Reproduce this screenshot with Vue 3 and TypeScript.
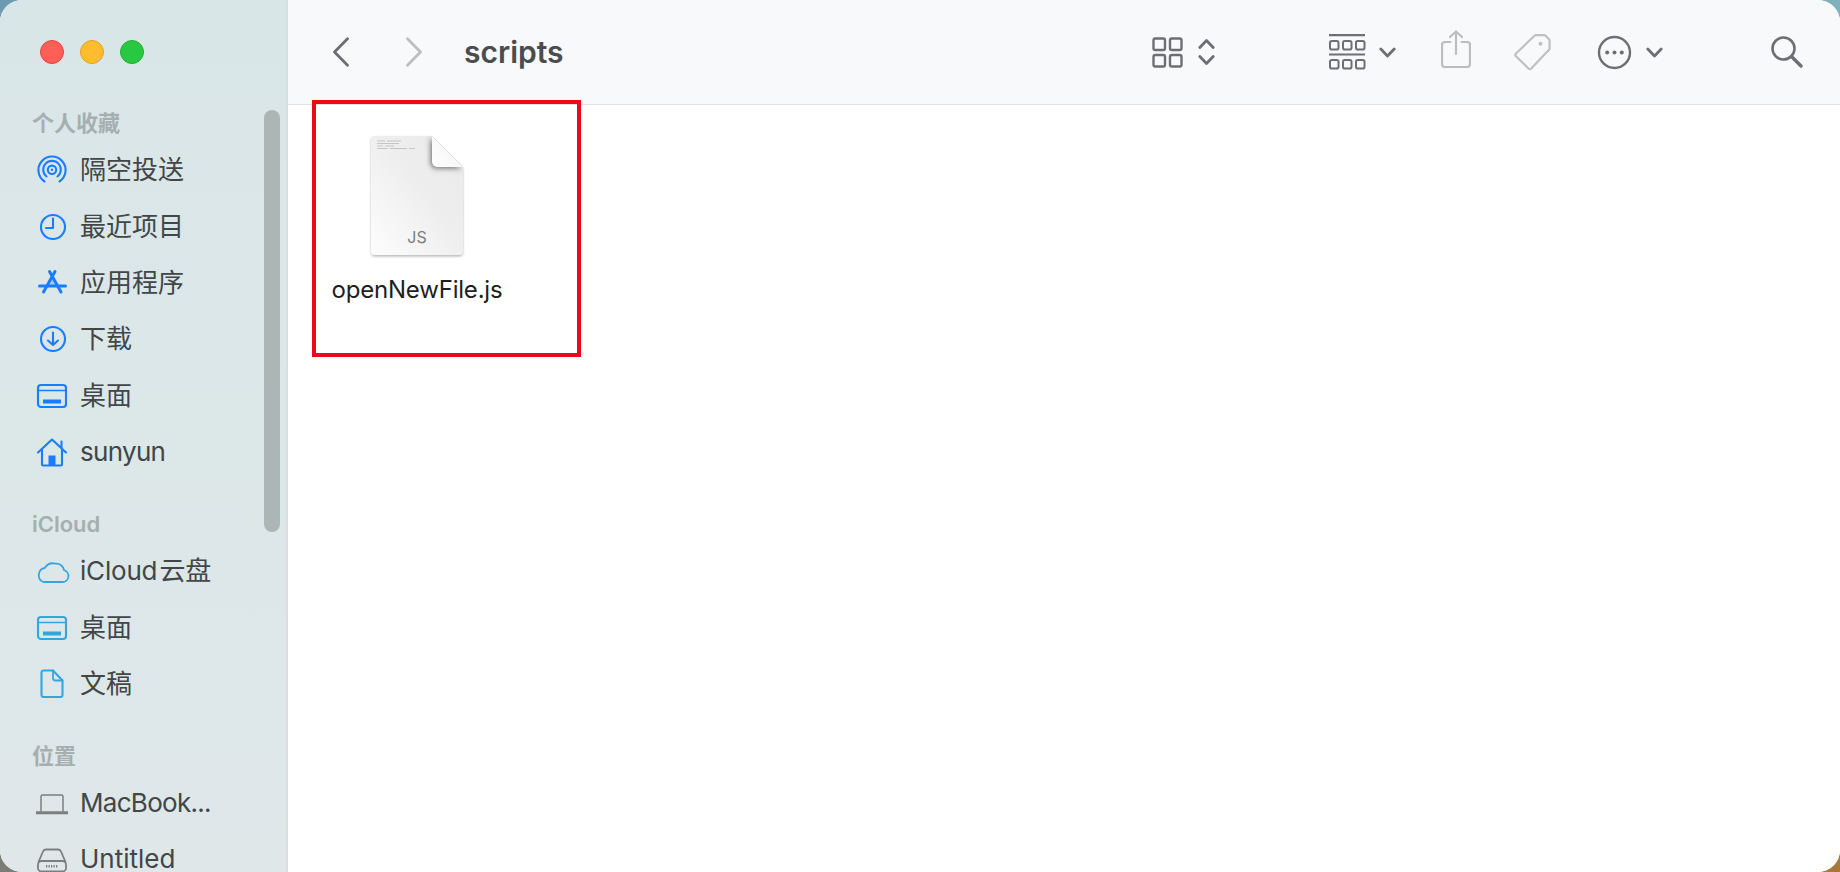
<script setup lang="ts">
interface Row { icon: string; label: string; tone: string; fit?: string }
interface Section { title: string; rows: Row[] }
const sections: Section[] = [
  { title: '个人收藏', rows: [
    { icon: 'airdrop', label: '隔空投送', tone: 'blue' },
    { icon: 'clock', label: '最近项目', tone: 'blue' },
    { icon: 'apps', label: '应用程序', tone: 'blue' },
    { icon: 'download', label: '下载', tone: 'blue' },
    { icon: 'desktop', label: '桌面', tone: 'blue' },
    { icon: 'home', label: 'sunyun', tone: 'blue', fit: 'tight' },
  ] },
  { title: 'iCloud', rows: [
    { icon: 'cloud', label: 'iCloud\u200A云盘', tone: 'sky', fit: 'slight' },
    { icon: 'desktop', label: '桌面', tone: 'sky' },
    { icon: 'doc', label: '文稿', tone: 'sky' },
  ] },
  { title: '位置', rows: [
    { icon: 'laptop', label: 'MacBook...', tone: 'gray', fit: 'tight' },
    { icon: 'disk', label: 'Untitled', tone: 'gray' },
  ] },
]
</script>

<template>
  <div class="desk">
    <div class="window">
      <aside class="sidebar">
        <div class="lights">
          <span class="light red"></span>
          <span class="light yellow"></span>
          <span class="light green"></span>
        </div>
        <section v-for="s in sections" :key="s.title" class="group">
          <h3 class="group-title">{{ s.title }}</h3>
          <div v-for="r in s.rows" :key="r.label" class="row">
            <svg class="row-icon" :class="r.tone" viewBox="0 0 36 36" fill="none" stroke="currentColor" stroke-width="2.1" stroke-linecap="round" stroke-linejoin="round">
              <template v-if="r.icon === 'airdrop'">
                <path d="M10.500 29.500a13.600 13.600 0 1 1 15 0" />
                <path d="M12.500 24.500a8.800 8.800 0 1 1 11 0" />
                <circle cx="18" cy="17.800" r="4.200" />
                <circle cx="18" cy="17.800" r="1.200" fill="currentColor" stroke="none" />
              </template>
              <template v-else-if="r.icon === 'clock'">
                <circle cx="19" cy="18" r="12" />
                <path d="M19 9.500V19H12" />
              </template>
              <template v-else-if="r.icon === 'apps'">
                <path d="M15.500 6.500L27 27" stroke-width="3" />
                <path d="M21 6.500L9.500 27" stroke-width="3" />
                <path d="M5.500 21h26" stroke-width="3" />
                <path d="M12 21l6.200-9 6.200 9z" fill="currentColor" stroke="none" opacity=".25" />
              </template>
              <template v-else-if="r.icon === 'download'">
                <circle cx="19" cy="18" r="12" />
                <path d="M19 11.500V24M14 19.500l5 4.600 5-4.600" />
              </template>
              <template v-else-if="r.icon === 'desktop'">
                <rect x="4" y="7" width="28" height="22" rx="3" />
                <path d="M4 12.500h28" stroke-width="1.600" />
                <rect x="9" y="21.500" width="18" height="4" fill="currentColor" stroke="none" />
              </template>
              <template v-else-if="r.icon === 'home'">
                <path d="M4 18.500L18 5.500l14 13" />
                <path d="M8 16v14.500a1 1 0 0 0 1 1h18a1 1 0 0 0 1-1V16" />
                <path d="M27.500 7.500v6" />
                <rect x="14.500" y="21.500" width="7" height="10" fill="currentColor" stroke="none" />
              </template>
              <template v-else-if="r.icon === 'cloud'">
                <path d="M9.500 29h19a6 6 0 0 0 1.500-11.800 7.500 7.500 0 0 0-8.500-6.500A9.500 9.500 0 0 0 11 14.800 7.400 7.400 0 0 0 9.500 29z" stroke-width="1.800" />
              </template>
              <template v-else-if="r.icon === 'doc'">
                <path d="M9 6.500a2 2 0 0 1 2-2h9.500L30 14.500V29a2 2 0 0 1-2 2H11a2 2 0 0 1-2-2z" transform="translate(-1.500 0)" />
                <path d="M19 4.500V12a2.500 2.500 0 0 0 2.500 2.500H28.500" stroke-width="1.800" />
              </template>
              <template v-else-if="r.icon === 'laptop'">
                <path d="M7 26V11.500A1.500 1.500 0 0 1 8.500 10h19a1.500 1.500 0 0 1 1.500 1.500V26" stroke-width="1.500" />
                <path d="M2 27.800h32" stroke-width="3" stroke-linecap="butt" />
              </template>
              <template v-else>
                <path d="M4.500 21L9 10.500A3 3 0 0 1 11.700 8.500h12.600a3 3 0 0 1 2.700 2L31.500 21" stroke-width="1.800" />
                <rect x="4" y="20" width="28" height="10.500" rx="3.500" stroke-width="1.800" />
                <path d="M12 25.300h12" stroke-width="2.600" stroke-dasharray="1.300 1.200" stroke-linecap="butt" />
              </template>
            </svg>
            <span class="row-label" :class="r.fit">{{ r.label }}</span>
          </div>
        </section>
        <div class="scrollbar"></div>
      </aside>

      <main class="main">
        <header class="toolbar">
          <svg class="tb back" width="18" height="30" viewBox="0 0 18 30" fill="none" stroke="#6c6e71" stroke-width="2.800" stroke-linecap="round" stroke-linejoin="round"><path d="M15.500 1.800L2.500 15l13 13.200" /></svg>
          <svg class="tb forward" width="18" height="30" viewBox="0 0 18 30" fill="none" stroke="#bcbdbf" stroke-width="2.800" stroke-linecap="round" stroke-linejoin="round"><path d="M2.500 1.800L15.500 15l-13 13.200" /></svg>
          <h1 class="title">scripts</h1>
          <svg class="tb grid" width="31" height="31" viewBox="0 0 31 31" fill="none" stroke="#6d6f72" stroke-width="2.400"><rect x="1.500" y="1.500" width="11.500" height="11.500" rx="1.800" /><rect x="18" y="1.500" width="11.500" height="11.500" rx="1.800" /><rect x="1.500" y="18" width="11.500" height="11.500" rx="1.800" /><rect x="18" y="18" width="11.500" height="11.500" rx="1.800" /></svg>
          <svg class="tb updown" width="17" height="28" viewBox="0 0 17 28" fill="none" stroke="#6d6f72" stroke-width="2.800" stroke-linecap="round" stroke-linejoin="round"><path d="M1.800 9.500L8.500 2.500l6.700 7M1.800 18.500l6.700 7 6.700-7" /></svg>
          <svg class="tb groupby" width="37" height="36" viewBox="0 0 37 36" fill="none" stroke="#6d6f72"><path d="M0 1.200h36M0 20.500h36" stroke-width="2.200" /><g stroke-width="2"><rect x="1" y="7" width="8.500" height="8.500" rx="1.800" /><rect x="14" y="7" width="8.500" height="8.500" rx="1.800" /><rect x="27" y="7" width="8.500" height="8.500" rx="1.800" /><rect x="1" y="26" width="8.500" height="8.500" rx="1.800" /><rect x="14" y="26" width="8.500" height="8.500" rx="1.800" /><rect x="27" y="26" width="8.500" height="8.500" rx="1.800" /></g></svg>
          <svg class="tb chev chev1" width="17" height="11" viewBox="0 0 17 11" fill="none" stroke="#6d6f72" stroke-width="2.800" stroke-linecap="round" stroke-linejoin="round"><path d="M1.800 2L8.500 9l6.700-7" /></svg>
          <svg class="tb share" width="30" height="38" viewBox="0 0 30 38" fill="none" stroke="#bcbdbf" stroke-width="2.200" stroke-linecap="round" stroke-linejoin="round"><path d="M9.500 12H4a3 3 0 0 0-3 3v19a3 3 0 0 0 3 3h22a3 3 0 0 0 3-3V15a3 3 0 0 0-3-3h-5.500" /><path d="M15 24V1.500M9 7l6-5.500L21 7" /></svg>
          <svg class="tb tag" width="38" height="38" viewBox="0 0 38 38" fill="none" stroke="#bfc0c2" stroke-width="2.200" stroke-linejoin="round"><path d="M3 20.500L21.500 2.800a2 2 0 0 1 1.400-.6H31a2 2 0 0 1 1.500.6l3.500 3.500a2 2 0 0 1 .6 1.500v7.500a2 2 0 0 1-.6 1.500L18.300 35.500a2 2 0 0 1-2.800 0L3 23.300a2 2 0 0 1 0-2.800z" /><circle cx="27.500" cy="10.800" r="2" fill="#bfc0c2" stroke="none" /></svg>
          <svg class="tb more" width="35" height="35" viewBox="0 0 35 35" fill="none" stroke="#6d6f72" stroke-width="2.400"><circle cx="17.500" cy="17.500" r="15.500" /><g fill="#6d6f72" stroke="none"><circle cx="10.200" cy="17.500" r="2" /><circle cx="17.500" cy="17.500" r="2" /><circle cx="24.800" cy="17.500" r="2" /></g></svg>
          <svg class="tb chev chev2" width="17" height="11" viewBox="0 0 17 11" fill="none" stroke="#6d6f72" stroke-width="2.800" stroke-linecap="round" stroke-linejoin="round"><path d="M1.800 2L8.500 9l6.700-7" /></svg>
          <svg class="tb search" width="32" height="32" viewBox="0 0 32 32" fill="none" stroke="#6d6f72" stroke-linecap="round"><circle cx="12.500" cy="12.500" r="11" stroke-width="2.600" /><path d="M20.500 20.500L30 30" stroke-width="3.400" /></svg>
        </header>

        <div class="content">
          <div class="file">
            <svg class="file-icon" width="100" height="128" viewBox="0 0 100 128">
              <defs>
                <linearGradient id="sheet" x1="0" y1="1" x2="1" y2="0">
                  <stop offset="0" stop-color="#fdfdfd" />
                  <stop offset=".55" stop-color="#eeeeee" />
                  <stop offset="1" stop-color="#e9e9e9" />
                </linearGradient>
                <linearGradient id="fold" x1="0" y1="1" x2="1" y2="0">
                  <stop offset="0" stop-color="#ffffff" />
                  <stop offset="1" stop-color="#f1f1f1" />
                </linearGradient>
                <filter id="lift" x="-10%" y="-10%" width="120%" height="120%">
                  <feDropShadow dx="0" dy="1.500" stdDeviation="1.200" flood-color="#000000" flood-opacity=".28" />
                </filter>
                <filter id="curl" x="-30%" y="-30%" width="160%" height="160%">
                  <feDropShadow dx="-1.500" dy="1.500" stdDeviation="2.500" flood-color="#000000" flood-opacity=".5" />
                </filter>
                <clipPath id="sheetClip">
                  <path d="M7 3h58l31 31v84a4 4 0 0 1-4 4H8a4 4 0 0 1-4-4V6a3 3 0 0 1 3-3z" />
                </clipPath>
              </defs>
              <path d="M7 3h58l31 31v84a4 4 0 0 1-4 4H8a4 4 0 0 1-4-4V6a3 3 0 0 1 3-3z" fill="url(#sheet)" filter="url(#lift)" />
              <g clip-path="url(#sheetClip)">
                <path d="M65 3l31 31H71a6 6 0 0 1-6-6z" fill="url(#fold)" filter="url(#curl)" />
              </g>
              <path d="M65.500 3.500L95.500 33.500" stroke="#dcdcdc" stroke-width=".8" fill="none" />
              <g stroke="#a9a9a9" stroke-width=".8" opacity=".75">
                <path d="M10 8h8M20 8h14M10 10.500h22M10 13h6M18 13h9M10 15.500h11M23 15.500h17M42 15.500h6" />
              </g>
              <text x="50" y="110" class="js">JS</text>
            </svg>
            <div class="file-name">openNewFile.js</div>
          </div>
          <div class="highlight"></div>
        </div>
      </main>
    </div>
  </div>
</template>

<style>
html, body { margin: 0; padding: 0; overflow: hidden; }
</style>

<style scoped>
.desk {
  width: 1840px;
  height: 872px;
  background: conic-gradient(from 0deg at 50% 50%, #7fb0bd 0 90deg, #a9793a 90deg 180deg, #7d7d78 180deg 270deg, #6f9bb0 270deg 360deg);
  font-family: Inter, "Noto Sans CJK SC", sans-serif;
}
.window {
  display: flex;
  width: 100%;
  height: 100%;
  border-radius: 22px;
  overflow: hidden;
  background: #fff;
}
.sidebar {
  position: relative;
  flex: 0 0 288px;
  box-sizing: border-box;
  height: 872px;
  overflow: hidden;
  background: linear-gradient(180deg, #d9e6e7 0%, #dce7e8 50%, #dfe7e9 100%);
  border-right: 2px solid #d9dfe0;
}
.lights {
  display: flex;
  gap: 16px;
  padding: 40px 0 0 40px;
  height: 66px;
}
.light {
  width: 24px;
  height: 24px;
  border-radius: 50%;
  box-sizing: border-box;
  border: 1px solid;
}
.red { background: #ff5f57; border-color: #e2463f; }
.yellow { background: #febc2e; border-color: #e1a325; }
.green { background: #28c840; border-color: #1fb032; }
.group { margin-bottom: 26.600px; }
.group-title {
  margin: 0;
  padding-left: 32px;
  height: 36px;
  line-height: 34px;
  font-size: 22px;
  font-weight: 600;
  color: #a5afb0;
}
.row {
  display: flex;
  align-items: center;
  height: 56.400px;
  padding-left: 34px;
}
.row-icon {
  width: 36px;
  height: 36px;
  flex: none;
  margin-right: 10px;
}
.row-icon.blue { color: #1a7dfb; }
.row-icon.sky { color: #35a6dd; }
.row-icon.gray { color: #7b7f81; }
.row-label {
  font-size: 26px;
  line-height: 26px;
  color: #424647;
  white-space: nowrap;
}
.row-label.tight { letter-spacing: -0.700px; }
.row-label.slight { letter-spacing: -0.200px; }
.scrollbar {
  position: absolute;
  left: 264px;
  top: 110px;
  width: 16px;
  height: 422px;
  border-radius: 8px;
  background: #adb6b6;
}
.main {
  flex: 1;
  display: flex;
  flex-direction: column;
  min-width: 0;
}
.toolbar {
  flex: 0 0 105px;
  box-sizing: border-box;
  display: flex;
  align-items: center;
  background: #f8f9fb;
  border-bottom: 1px solid #dfe1e5;
  padding-left: 44px;
}
.tb { flex: none; display: block; }
.forward { margin-left: 55px; }
.title {
  margin: 0 0 0 41px;
  font-size: 30px;
  font-weight: 600;
  color: #4a4c4e;
  width: 688px;
  flex: none;
}
.updown { margin-left: 15px; }
.groupby { margin-left: 114px; }
.chev1 { margin-left: 13px; }
.share { margin-left: 45px; margin-top: -6px; }
.tag { margin-left: 42px; }
.more { margin-left: 46px; }
.chev2 { margin-left: 14px; }
.search { margin-left: 108px; }
.content {
  position: relative;
  flex: 1;
  background: #fff;
}
.file {
  width: 230px;
  margin-left: 14px;
  padding-top: 28px;
  display: flex;
  flex-direction: column;
  align-items: center;
}
.file-icon { display: block; }
.js {
  font-family: Inter, sans-serif;
  font-size: 16px;
  fill: #7d7d7d;
  text-anchor: middle;
}
.file-name {
  margin-top: 13px;
  font-size: 24px;
  line-height: 32px;
  letter-spacing: -0.200px;
  color: #1e1e1e;
  white-space: nowrap;
}
.highlight {
  position: absolute;
  left: 24px;
  top: -5px;
  width: 269px;
  height: 257px;
  box-sizing: border-box;
  border: 4px solid #ec0a1a;
}
</style>
